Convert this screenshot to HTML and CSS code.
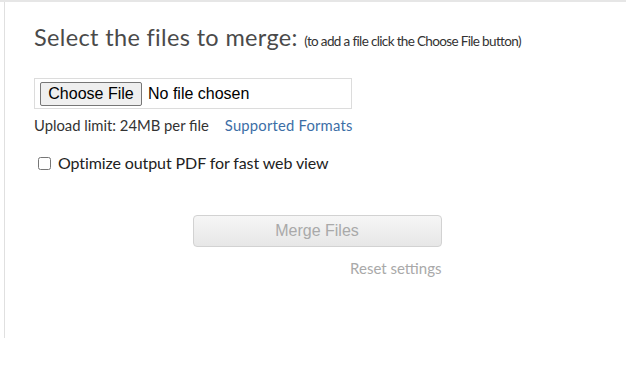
FILE: index.html
```html
<!DOCTYPE html>
<html lang="en">
<head>
<meta charset="utf-8">
<title>Merge PDF</title>
<link rel="stylesheet" href="styles.css">
</head>
<body>
<div class="frame">
  <div class="panel">
    <h2 class="title">Select the files to merge: <span class="hint">(to add a file click the Choose File button)</span></h2>
    <div class="filebox">
      <label class="choose">Choose File<input class="hidden-input" type="file"></label>
      <span class="nofile">No file chosen</span>
    </div>
    <div class="limits">
      <span class="limit">Upload limit: 24MB per file</span>
      <a class="formats" href="#">Supported Formats</a>
    </div>
    <label class="option">
      <input class="check" type="checkbox">
      <span>Optimize output PDF for fast web view</span>
    </label>
    <div class="actions">
      <button class="merge" disabled>Merge Files</button>
      <a class="reset" href="#">Reset settings</a>
    </div>
  </div>
</div>
</body>
</html>
```

FILE: styles.css
```css
html, body {
  margin: 0;
  padding: 0;
  background: #ffffff;
}

.frame {
  border-top: 2px solid #e6e6e6;
  width: 626px;
}

.panel {
  margin-left: 4px;
  border-left: 1px solid #e0e0e0;
  height: 336px;
  box-sizing: border-box;
  padding: 21px 26px 0 29px;
  font-family: "Lato", "Liberation Sans", sans-serif;
  display: flex;
  flex-direction: column;
  align-items: flex-start;
}

.title {
  margin: 0;
  font-weight: 400;
  font-size: 23.5px;
  line-height: 28px;
  height: 28px;
  letter-spacing: 0.35px;
  color: #4a4a4a;
  white-space: nowrap;
}

.hint {
  font-size: 13.5px;
  line-height: 14px;
  letter-spacing: -0.65px;
  color: #333333;
}

.filebox {
  margin-top: 27px;
  width: 318px;
  height: 31px;
  box-sizing: border-box;
  border: 1px solid #dcdcdc;
  padding: 3px 5px 2px 5px;
  display: flex;
  align-items: center;
  gap: 6px;
  font-family: "Liberation Sans", Arial, sans-serif;
  font-size: 16px;
  color: #000;
}

.choose {
  height: 24px;
  box-sizing: border-box;
  width: 102px;
  display: flex;
  align-items: center;
  justify-content: center;
  background: #efefef;
  border: 1px solid #767676;
  border-radius: 2px;
  color: #000;
}

.hidden-input {
  display: none;
}

.limits {
  margin-top: 7px;
  display: flex;
  gap: 16px;
  font-size: 14.8px;
  line-height: 18px;
}

.limit {
  color: #333333;
}

.formats {
  color: #3c6ea6;
  letter-spacing: 0.2px;
  text-decoration: none;
}

.option {
  margin-top: 19px;
  display: flex;
  align-items: center;
  gap: 7px;
  font-size: 16px;
  line-height: 20px;
  letter-spacing: -0.1px;
  color: #222222;
}

.check {
  margin: 0 0 0 4px;
  width: 13px;
  height: 13px;
}

.actions {
  align-self: center;
  margin-top: 42px;
  width: 249px;
  display: flex;
  flex-direction: column;
  align-items: flex-end;
}

.merge {
  width: 249px;
  height: 32px;
  border: 1px solid #d2d2d2;
  border-radius: 4px;
  background: linear-gradient(#f6f6f6, #e7e7e7);
  color: #a9a9a9;
  font-family: "Liberation Sans", Arial, sans-serif;
  font-size: 16px;
}

.reset {
  margin-top: 12px;
  font-size: 15px;
  line-height: 18px;
  color: #a9a9a9;
  text-decoration: none;
}
```
